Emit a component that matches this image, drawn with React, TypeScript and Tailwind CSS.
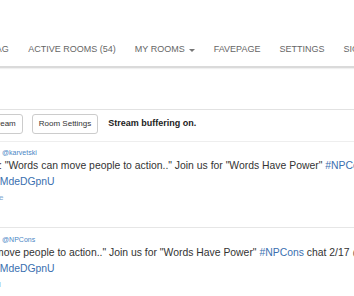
import React from 'react'

const navItems = ['ACTIVE ROOMS (54)', 'MY ROOMS', 'FAVEPAGE', 'SETTINGS', 'SIGN OUT']

function Tweet({ user, text, offset, top, foot }: { user: string; text: React.ReactNode; offset: string; top: string; foot: string }) {
  return (
    <div className={`h-[86px] border-b border-[#e6e6e6] ${top}`}>
      <div className="text-[7px] leading-[10px] text-[#4a86c5] pl-[2px]">@{user}</div>
      <div className={`whitespace-nowrap text-[10.4px] leading-[16px] text-[#333] ${offset}`}>{text}</div>
      <div className="whitespace-nowrap text-[10.4px] leading-[16px] text-[#3a6fb0] -ml-[17px]">.co/MdeDGpnU</div>
      <div className="mt-[2px] text-[8px] leading-[12px] text-[#7fa6cf] -ml-[1px]">{foot}</div>
    </div>
  )
}

export default function App() {
  const tail = (
    <>
      move people to action..&quot; Join us for &quot;Words Have Power&quot;{' '}
      <span className="text-[#3a6fb0]">#NPCons</span> chat 2/17 @ 3pm ET
    </>
  )

  return (
    <div className="w-[354px] h-[296px] overflow-hidden bg-white font-['Liberation_Sans',Arial,sans-serif]">
      <div className="h-[68px] flex items-end border-b-2 border-[#dadada] shadow-[0_1px_1px_rgba(0,0,0,0.06)]">
        <div className="h-[32px] flex items-center whitespace-nowrap text-[9px] text-[#666] -ml-[9px]">
          <span className="pr-[10px]">TAG</span>
          {navItems.map(item => (
            <span key={item} className="px-[9.5px] flex items-center gap-[4px]">
              {item}
              {item === 'MY ROOMS' && (
                <span className="w-0 h-0 border-t-[3px] border-t-[#777] border-x-[3px] border-x-transparent" />
              )}
            </span>
          ))}
        </div>
      </div>

      <div className="h-[41px]" />

      <div className="border-t border-[#e2e2e2] border-b border-b-[#eeeeee] pt-[4px] pb-[7px] flex items-center gap-[9px] whitespace-nowrap">
        <button className="-ml-[17px] h-[20px] px-[6px] border border-[#cccccc] rounded-[3px] bg-white text-[8px] text-[#333]">
          Stream
        </button>
        <button className="h-[20px] px-[6px] border border-[#cccccc] rounded-[3px] bg-white text-[8px] text-[#333]">
          Room Settings
        </button>
        <span className="ml-[1px] text-[9px] font-bold text-[#222]">Stream buffering on.</span>
      </div>

      <Tweet
        user="karvetski"
        top="pt-[6px]"
        offset="-ml-[1px]"
        foot="e"
        text={<>: &quot;Words can {tail}</>}
      />

      <Tweet user="NPCons" top="pt-[7px]" offset="-ml-[5px]" foot="l" text={tail} />
    </div>
  )
}
